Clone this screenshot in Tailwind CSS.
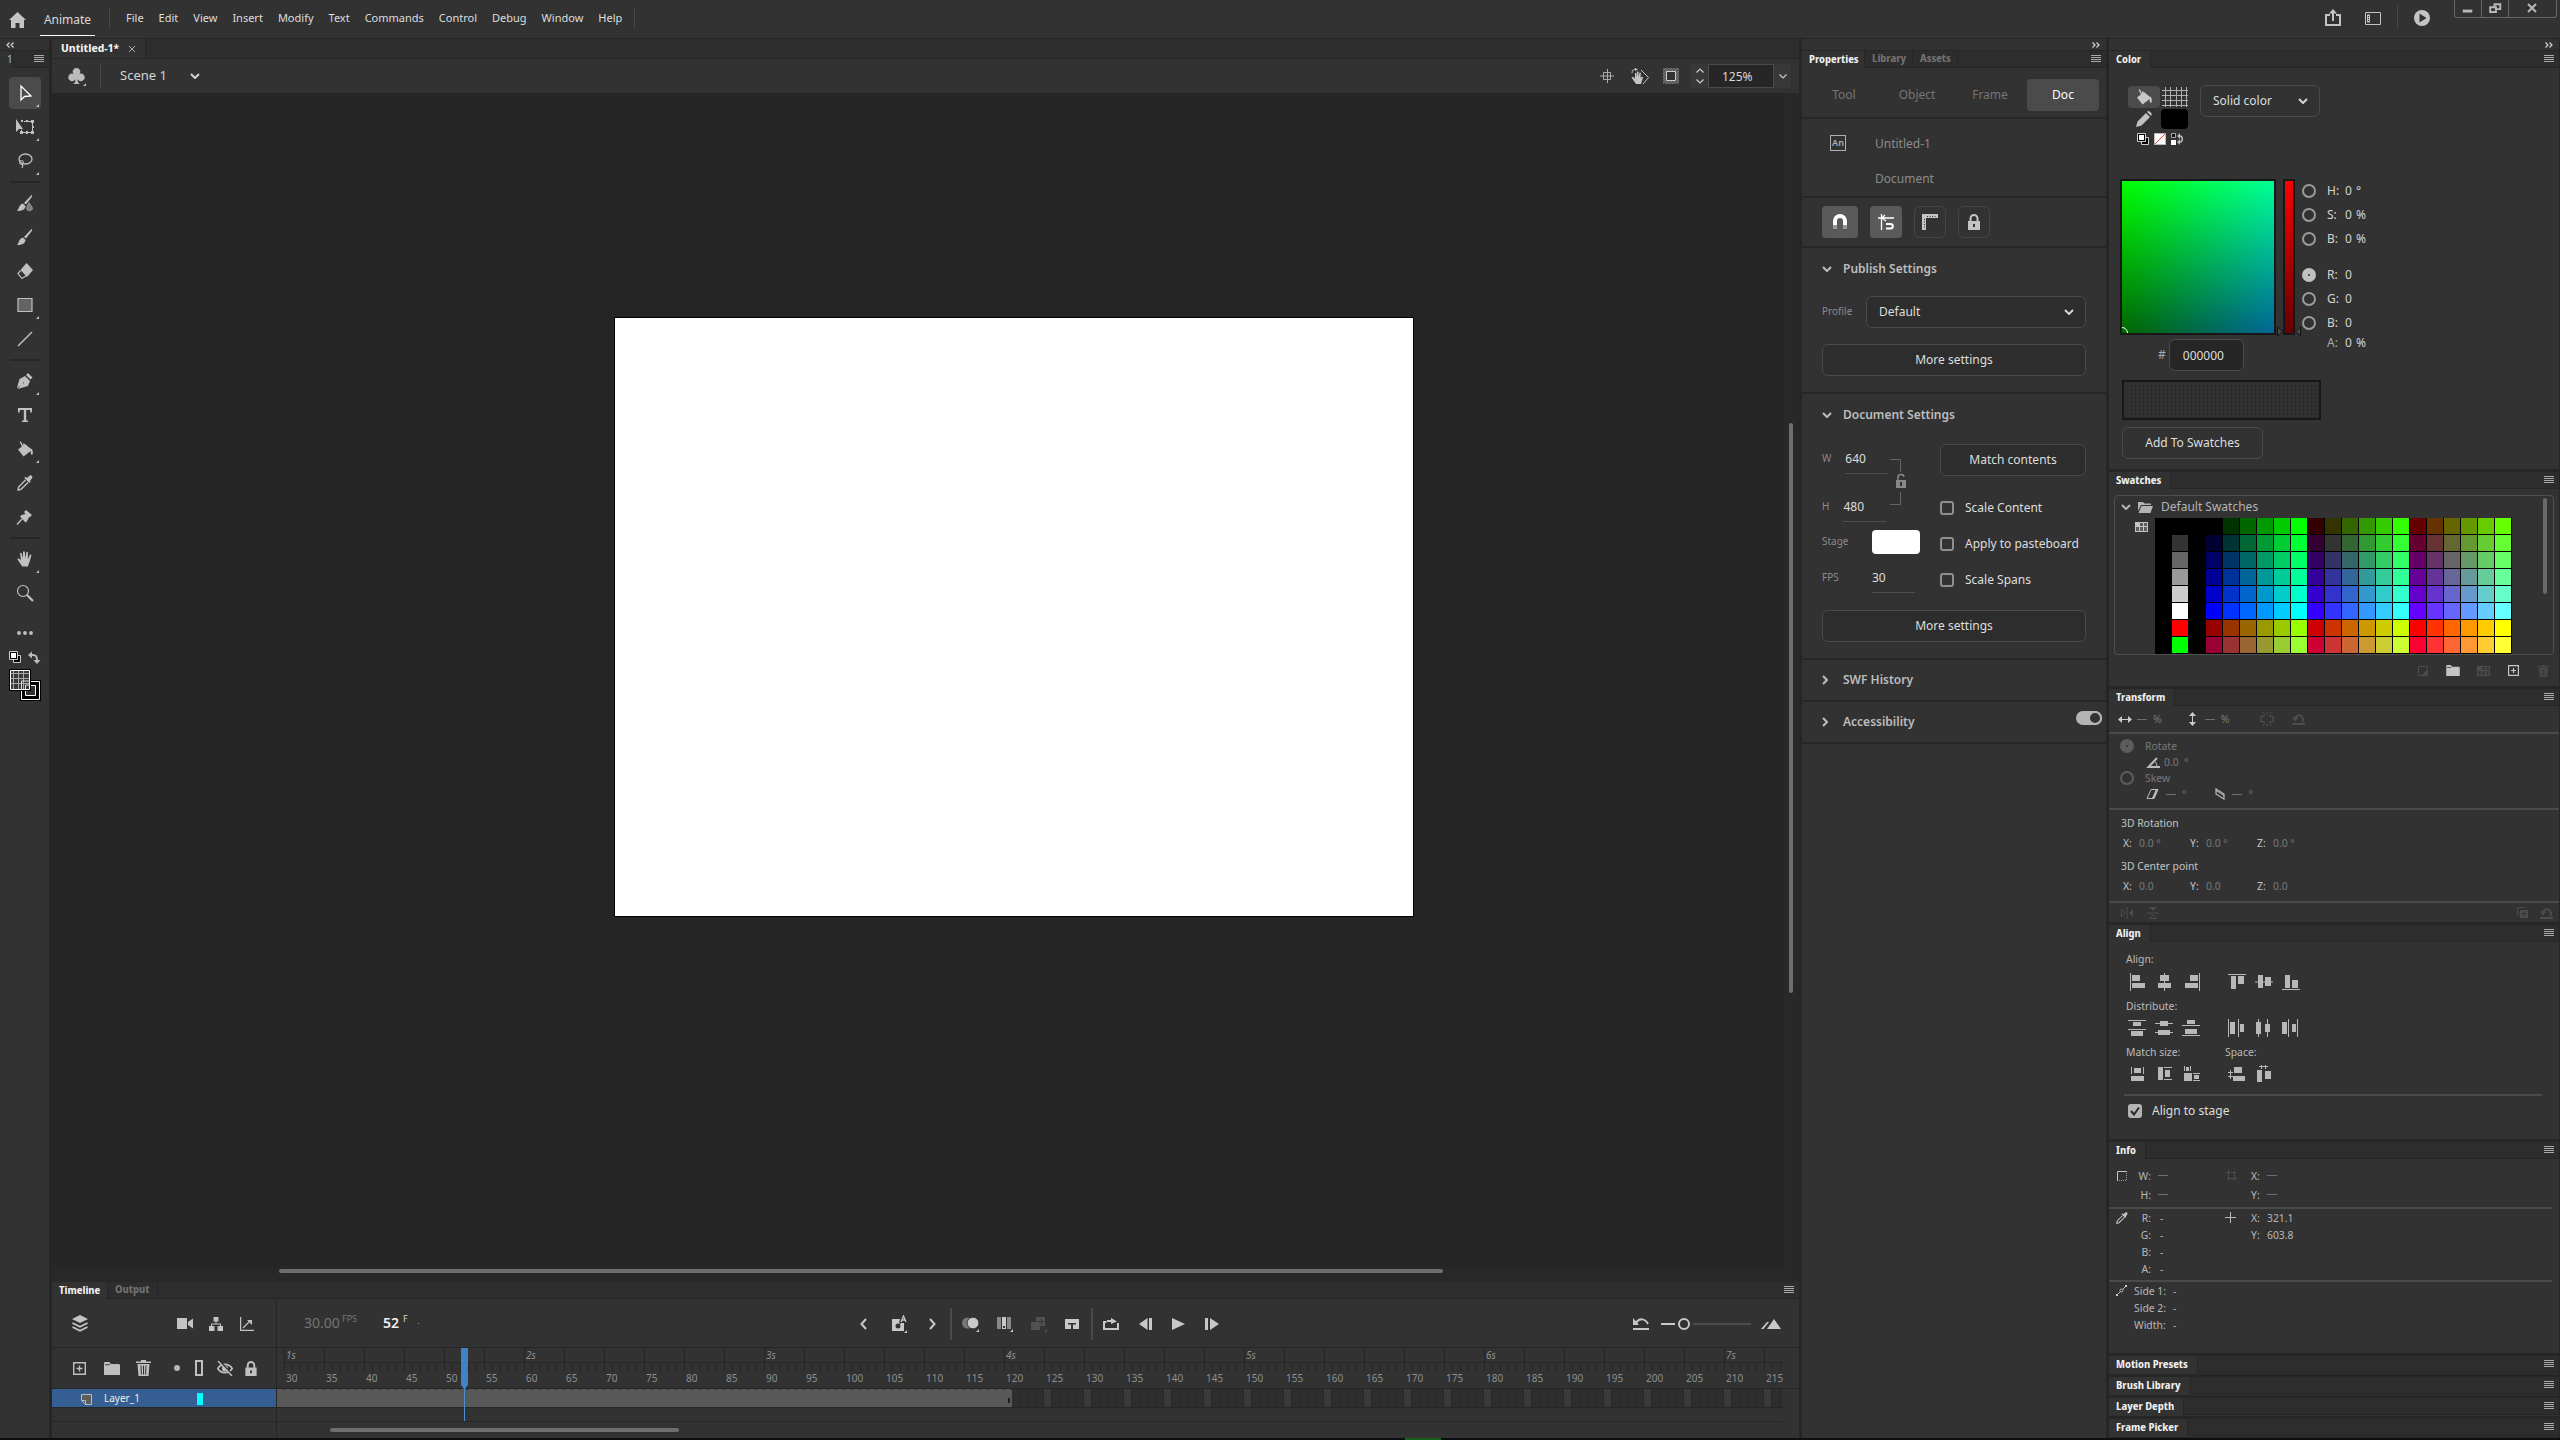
<!DOCTYPE html>
<html lang="en">
<head>
<meta charset="utf-8">
<title>Animate</title>
<script src="https://cdn.jsdelivr.net/npm/@tailwindcss/browser@4"></script>
</head>
<body class="flex h-screen flex-col overflow-hidden bg-[#262626] font-['Noto_Sans',sans-serif] text-xs text-[#d4d4d4]">

<svg class="hidden" aria-hidden="true">
  <symbol id="menu" viewBox="0 0 10 8"><path fill="currentColor" d="M0 0h10v1H0zM0 2h10v1H0zM0 4h10v1H0zM0 6h10v1H0z"/></symbol>
  <symbol id="down" viewBox="0 0 10 6"><path fill="none" stroke="currentColor" stroke-width="2" d="M1 1l4 4 4-4"/></symbol>
  <symbol id="thindown" viewBox="0 0 8 5"><path fill="none" stroke="currentColor" stroke-width="1.2" d="M.5.5L4 4 7.500 .5"/></symbol>
  <symbol id="right" viewBox="0 0 6 10"><path fill="none" stroke="currentColor" stroke-width="2" d="M1 1l4 4-4 4"/></symbol>
  <symbol id="dbl" viewBox="0 0 8 6"><path fill="none" stroke="currentColor" stroke-width="1.200" d="M.5.5L3 3 .5 5.500M4.500 .5L7 3 4.500 5.500"/></symbol>
  <symbol id="corner" viewBox="0 0 3 3"><path fill="currentColor" d="M3 0v3H0z"/></symbol>
  <symbol id="bucket" viewBox="0 0 16 16"><path fill="currentColor" d="M1 8.500L8 3l5.500 4.500c1.800.3 2.500 2 2.300 5.500l-1 1c-1-.8-1.300-2-1.100-4L6.500 15.500z"/><path fill="none" stroke="currentColor" stroke-width="1.400" d="M3.200.6L6.500 7M6.500 2.500L8 6"/></symbol>
  <symbol id="dropper" viewBox="0 0 16 16"><path fill="currentColor" d="M10 3l2.500-2.300c1.500-1.200 3.800 1 2.500 2.600L13 6l.6.700-1.300 1.300-5-5L8.600 1.700z"/><path fill="none" stroke="currentColor" stroke-width="1.400" d="M8.500 5L1.600 12 1 15l3-.7L11 7.500"/></symbol>
  <symbol id="folder" viewBox="0 0 16 13"><path fill="currentColor" d="M0 1.500C0 .7.500 0 1.200 0h4l1.800 2H15l1 1v10H0z"/><path fill="#323232" d="M1 2.300h5v.9H1z"/></symbol>
  <symbol id="plusbox" viewBox="0 0 13 13"><path fill="none" stroke="currentColor" stroke-width="1.400" d="M.7.7h11.600v11.600H.7zM6.500 3.500v6M3.500 6.500h6"/></symbol>
  <symbol id="trash" viewBox="0 0 15 16"><path fill="currentColor" d="M5 0h5v1.500h5V3H0V1.500h5zM1.500 4h12l-1 12h-10z"/><path stroke="#323232" d="M5 5.500l.4 9M7.500 5.500v9M10 5.500l-.4 9"/></symbol>
  <symbol id="lock" viewBox="0 0 12 16"><path fill="currentColor" d="M0 7h12v9H0z"/><path fill="none" stroke="currentColor" stroke-width="2" d="M2.500 8V4.500a3.500 3.500 0 017 0V8"/><path fill="#323232" d="M5 10h2v3H5z"/></symbol>
  <symbol id="swgrid" viewBox="0 0 13 10"><path fill="currentColor" d="M0 0h13v10H0z"/><path fill="#323232" d="M5 1h3v3H5zM9 1h3v3H9zM1 5h3v4H1zM5 5h3v4H5zM9 5h3v4H9z" opacity=".7"/></symbol>
  <symbol id="defcol" viewBox="0 0 12 12"><path fill="#000" stroke="#ccc" d="M4.500 4.500h7v7h-7z"/><path fill="#fff" stroke="#000" stroke-width="2" d="M1 1h7v7H1z"/><path fill="none" stroke="#ccc" d="M.5.5h8v8h-8z"/></symbol>
  <symbol id="reset" viewBox="0 0 13 12"><path fill="none" stroke="currentColor" stroke-width="2" d="M3 6a4 4 0 117 3M0 11h13"/><path fill="currentColor" d="M0 4.500h6.500L3 8.500z"/></symbol>
  <symbol id="hatch" viewBox="0 0 26 20"><path stroke="#b0b0b0" stroke-width="1" fill="none" d="M3.500 0v20M8.500 0v20M14.500 0v20M19.500 0v20M24.500 0v20M0 3.500h26M0 8.500h26M0 13.500h26M0 18.500h26"/></symbol>
</svg>

<header class="flex h-[38px] shrink-0 bg-[#323232]">
  <button aria-label="Home" class="ml-[9px] mt-[11px] size-[17px] text-[#c4c4c4]"><svg viewBox="0 0 17 16"><path fill="currentColor" d="M8.500 0L17 8h-2v8h-4.500v-5h-4v5H2V8H0z"/></svg></button>
  <a href="#" class="ml-3.5 mr-3.5 mt-1 flex h-8 w-[55px] items-center justify-center border-b border-white text-[#d8d8d8]">Animate</a>
  <i class="mt-2 h-5 w-px bg-[#494949]"></i>
  <nav class="mt-2 ml-4 flex h-5 items-center gap-[15px] text-[11px] text-[#dedede]">
    <a href="#">File</a><a href="#">Edit</a><a href="#">View</a><a href="#">Insert</a><a href="#">Modify</a><a href="#">Text</a><a href="#">Commands</a><a href="#">Control</a><a href="#">Debug</a><a href="#">Window</a><a href="#">Help</a>
  </nav>
  <i class="mt-2 ml-3 h-5 w-px bg-[#494949]"></i>
  <div class="ml-auto flex text-[#c4c4c4]">
    <button aria-label="Share" class="mt-[9px] h-[17px] w-4"><svg viewBox="0 0 16 17"><path fill="none" stroke="currentColor" stroke-width="2" d="M5 6H1v10h14V6h-4M8 12V2"/><path fill="currentColor" d="M8 0l4 4.500H4z"/></svg></button>
    <button aria-label="Workspace" class="mt-3 ml-6 h-[13px] w-4"><svg viewBox="0 0 16 13"><path fill="none" stroke="currentColor" d="M.5.5h15v12H.5z"/><path fill="currentColor" d="M2 2.500h3v8H2z"/><path fill="#323232" d="M3 4h1v1H3zM3 6h1v1H3zM3 8h1v1H3z"/></svg></button>
    <i class="mt-1.5 ml-4 h-[23px] w-px bg-[#494949]"></i>
    <button aria-label="Test movie" class="mt-2.5 ml-4 size-4"><svg viewBox="0 0 16 16"><circle cx="8" cy="8" r="8" fill="currentColor"/><path fill="#323232" d="M5.500 3.500L12.500 8l-7 4.500z"/></svg></button>
    <div class="mr-[3px] ml-6 flex h-[18px] rounded-b-[3px] border border-t-0 border-[#666]">
      <button aria-label="Minimize" class="w-[27px] border-r border-[#666]"><svg viewBox="0 0 27 17"><path fill="#b8b8b8" d="M8 10h10v3H8z"/></svg></button>
      <button aria-label="Restore" class="w-[27px] border-r border-[#666]"><svg viewBox="0 0 27 17"><path fill="#323232" stroke="#b8b8b8" stroke-width="2" d="M13 4.500h6v5h-6z"/><path fill="#323232" stroke="#b8b8b8" stroke-width="2" d="M8.500 7.500h6v5h-6z"/></svg></button>
      <button aria-label="Close" class="w-[47px]"><svg viewBox="0 0 47 17"><path stroke="#b8b8b8" stroke-width="2" d="M19 4l8 8M27 4l-8 8"/></svg></button>
    </div>
  </div>
</header>

<div class="mt-px flex min-h-0 flex-1 gap-[3px]">

  <!-- Tools -->
  <aside class="flex w-[49px] shrink-0 flex-col bg-[#323232]">
    <div class="flex h-3 shrink-0 items-center border-b border-[#262626] pl-1.5"><svg class="h-1.5 w-2 rotate-180"><use href="#dbl"/></svg></div>
    <div class="flex h-[17px] items-center text-[10px]"><span class="w-3 pl-[7px] text-[#8fc1ea]">1</span><span class="flex h-full flex-1 items-center justify-end border-b border-l border-[#262626] bg-[#2d2d2d] pr-[5px]"><svg class="h-2 w-2.5 text-[#aaa]"><use href="#menu"/></svg></span></div>
    <div id="tools" class="flex flex-col items-center gap-0.5 pt-[9px] text-[#c0c0c0]"></div>
    <div class="relative mx-auto mt-2 h-[52px] w-8">
      <svg class="h-[52px] w-8" viewBox="0 0 32 52">
        <use href="#defcol" x="0" y="0" width="12" height="12"/>
        <path fill="none" stroke="#bbb" stroke-width="2" d="M22 4h2c3 0 4 1 4 5v1"/><path fill="#bbb" d="M19 4l4-3.500v7zM24.500 9h7L28 13z"/>
        <path fill="#000" d="M11 29h21v21H11z"/><path fill="none" stroke="#fff" d="M12.500 30.500h18v18h-18zM16.500 34.500h10v10h-10z"/><path fill="#323232" d="M17 35h9v9h-9z"/>
        <path fill="#000" d="M0 18h22v22H0z"/><path fill="#3a3a3a" stroke="#fff" d="M1.500 19.500h19v19h-19z"/>
        <path stroke="#aaa" d="M4.500 20v18M9.500 20v18M14.500 20v18M2 22.500h18M2 27.500h18M2 32.500h18"/><path fill="none" stroke="#ddd" d="M12.500 39v-9H21M16.500 38v-4H21"/>
      </svg>
    </div>
  </aside>

  <!-- Document and timeline -->
  <main class="flex min-w-0 flex-1 flex-col">
    <div class="flex h-5 shrink-0 border-b border-[#262626] bg-[#2d2d2d]">
      <div class="flex w-[94px] items-center border-r border-[#262626] bg-[#323232] pl-[9px] font-['Noto_Sans_Display','Noto_Sans',sans-serif] text-[11px] font-bold text-[#f0f0f0]">Untitled-1*<button aria-label="Close tab" class="ml-2.5 size-1.5"><svg viewBox="0 0 6 6"><path stroke="#aaa" d="M0 0l6 6M6 0L0 6"/></svg></button></div>
    </div>
    <div class="flex h-[34px] shrink-0 items-center bg-[#323232]">
      <button aria-label="Symbols" class="relative ml-4 size-[17px] text-[#bbb]"><svg viewBox="0 0 17 17"><path fill="currentColor" d="M8.500 0a3.600 3.600 0 013 5.800 3.800 3.800 0 11-2 5.400c0 2.300.8 3.800 2.500 4.800H5c1.700-1 2.500-2.500 2.500-4.800a3.800 3.800 0 11-2-5.400A3.600 3.600 0 018.500 0z"/></svg><svg class="absolute -right-px -bottom-px size-[3px]"><use href="#corner"/></svg></button>
      <i class="ml-[15px] h-6 w-px bg-[#4a4a4a]"></i>
      <div class="relative ml-[19px] flex items-center"><select aria-label="Scene" class="w-20 appearance-none text-[13px]"><option>Scene 1</option></select><svg class="pointer-events-none absolute right-0 h-1.5 w-2.5"><use href="#down"/></svg></div>
      <div class="ml-auto flex items-center text-[#aaa]">
        <button aria-label="Center stage" class="size-[14px]"><svg viewBox="0 0 14 14"><path fill="none" stroke="currentColor" d="M3.500 3.500h7v7h-7zM7.500 0v14M0 7h14"/></svg></button>
        <button aria-label="Rotate stage" class="ml-[17px] h-[17px] w-[18px]"><svg viewBox="0 0 18 17"><path fill="#c4c4c4" d="M5 16L.5 9.500l1.500-.8 2 2V5l1.300-.3.700 4V3.500h1.500V9l1-4.500 1.300.3-.2 5L11 8.500l1 1L10 16z"/><path fill="none" stroke="#c4c4c4" d="M1 5c0-3 2-4 4-4M10 2l7.500 7.500L12 16"/><path fill="#c4c4c4" d="M4 0l3 1.500L4 3z"/></svg></button>
        <button aria-label="Clip content" class="ml-3.5 size-4"><svg viewBox="0 0 16 16"><path fill="#555" d="M0 0h16v16H0z"/><path stroke="#888" stroke-width=".8" d="M0 3l3-3M0 6l6-6M0 9l3-3M6 3l3-3M0 12l3-3M9 3l3-3M0 15l3-3M12 3l3-3M3 16l3-3M6 16l3-3M9 16l3-3M13 6l3-3M13 9l3-3M13 12l3-3M13 15l3-3"/><path fill="#323232" stroke="#ccc" d="M3.500 3.500h9v9h-9z"/></svg></button>
        <div class="ml-3 flex h-6 w-[17px] flex-col items-center justify-between bg-[#383838] py-1 text-[#ccc]"><svg class="h-[5px] w-2 rotate-180"><use href="#thindown"/></svg><svg class="h-[5px] w-2"><use href="#thindown"/></svg></div>
        <input aria-label="Zoom" value="125%" class="h-6 w-[66px] border border-[#4a4a4a] bg-[#262626] pl-[13px] text-xs text-[#d8d8d8]">
        <button aria-label="Zoom levels" class="mr-2 flex h-6 w-[17px] items-center justify-center bg-[#383838] text-[#ccc]"><svg class="h-[5px] w-2"><use href="#thindown"/></svg></button>
      </div>
    </div>
    <div class="relative min-h-0 flex-1 bg-[#252525]">
      <div class="absolute top-0 right-0 bottom-0 w-4 bg-[#282828]"></div>
      <div class="absolute right-0 bottom-0 left-0 h-4 bg-[#282828]"></div>
      <div class="absolute top-[224px] left-[562px] h-[600px] w-[800px] border border-black bg-white"></div>
      <div class="absolute top-[330px] right-1.5 h-[570px] w-1 rounded-full bg-[#6e6e6e]"></div>
      <div class="absolute bottom-[9px] left-[227px] h-1 w-[1164px] rounded-full bg-[#6e6e6e]"></div>
    </div>

    <section class="shrink-0 bg-[#323232]">
      <div class="flex h-[17px] font-['Noto_Sans_Display','Noto_Sans',sans-serif] text-[10px] font-bold">
        <button class="w-14 border-r border-[#262626] pl-[7px] text-left text-[#f0f0f0]">Timeline</button>
        <button class="w-[50px] border-r border-b border-[#262626] bg-[#2d2d2d] pl-[7px] text-left text-[#737373]">Output</button>
        <div class="flex flex-1 items-center justify-end border-b border-[#262626] bg-[#2d2d2d] pr-[5px]"><svg class="h-2 w-2.5 text-[#aaa]"><use href="#menu"/></svg></div>
      </div>
      <div class="flex h-[49px] border-b border-[#262626] pt-px">
        <div class="flex w-[225px] items-center border-r border-[#262626] text-[#c4c4c4]">
          <button aria-label="Layer view" class="ml-5 h-[17px] w-4"><svg viewBox="0 0 16 17"><path fill="currentColor" d="M8 0l8 4-8 4-8-4z"/><path fill="none" stroke="currentColor" stroke-width="1.800" d="M.5 8L8 11.700 15.500 8M.5 12L8 15.700 15.500 12"/></svg></button>
          <button aria-label="Camera" class="ml-[89px] h-[11px] w-4"><svg viewBox="0 0 16 11"><path fill="currentColor" d="M0 0h10v11H0zM11 4l5-3.500v10L11 7z"/></svg></button>
          <button aria-label="Parenting" class="ml-4 size-[14px]"><svg viewBox="0 0 14 14"><path fill="currentColor" d="M4.500 0h5v4.500h-5zM0 9h5.500v5H0zM8.500 9H14v5H8.500zM6.500 4h1v2.500h4.500V9h-1V7.500H3V9H2V6.500h4.500z"/></svg></button>
          <button aria-label="Graph" class="ml-[17px] size-[14px]"><svg viewBox="0 0 14 14"><path fill="none" stroke="currentColor" stroke-width="1.200" d="M.6 0v13.400H14M3 11l7-7"/><path fill="currentColor" d="M7 3h5v5z"/></svg></button>
        </div>
        <div class="flex flex-1 items-center text-[14px]">
          <span class="ml-[27px] w-[38px] text-[#747474]">30.00</span><sup class="text-[9px] text-[#747474]">FPS</sup>
          <span class="ml-[26px] font-semibold text-[#f0f0f0]">52</span><sup class="ml-1 text-[9px]">F</sup><i class="ml-2.5 size-px bg-[#999]"></i>
          <div class="ml-[441px] flex items-center text-[#c8c8c8]">
            <button aria-label="Previous keyframe" class="h-3 w-[7px]"><svg viewBox="0 0 7 12"><path fill="none" stroke="currentColor" stroke-width="2" d="M6 1L1.500 6 6 11"/></svg></button>
            <button aria-label="Auto keyframe" class="ml-[25px] h-[18px] w-[15px]"><svg viewBox="0 0 15 18"><path fill="currentColor" d="M0 4h8l-1 4h5v8H0z"/><circle cx="6" cy="11" r="2.500" fill="#323232"/><path stroke="#323232" d="M6 11l5-6"/><path fill="none" stroke="currentColor" stroke-width="1.300" d="M9 7l2.500-6L14 7M10 5h3.500"/><path fill="currentColor" d="M15 15v3h-3z"/></svg></button>
            <button aria-label="Next keyframe" class="ml-[22px] h-3 w-[7px]"><svg viewBox="0 0 7 12"><path fill="none" stroke="currentColor" stroke-width="2" d="M1 1l4.500 5L1 11"/></svg></button>
            <i class="ml-3.5 h-8 w-0.5 bg-[#4a4a4a]"></i>
            <button aria-label="Onion skin" class="ml-2.5 h-4 w-[17px]"><svg viewBox="0 0 17 16"><circle cx="5.500" cy="7" r="5.500" fill="#777"/><circle cx="11" cy="7" r="5.800" fill="currentColor" stroke="#323232" stroke-width=".8"/><path fill="currentColor" d="M17 13v3h-3z"/></svg></button>
            <button aria-label="Edit multiple frames" class="ml-[18px] h-4 w-4"><svg viewBox="0 0 16 16"><path fill="#888" d="M0 1h4v12H0zM10 1h4v12h-4z"/><path fill="currentColor" d="M5 1h4v12H5z"/><path fill="#323232" d="M6 10h2v2H6z"/><path fill="currentColor" d="M16 13v3h-3z"/></svg></button>
            <button aria-label="Insert frames" class="ml-[18px] h-4 w-4 text-[#505050]"><svg viewBox="0 0 16 16"><path fill="currentColor" d="M5 1h9v9h-5v4H0V6h5z"/><path stroke="#323232" d="M6 5.500h6M9.500 3L12 5.500 9.500 8" fill="none"/><path fill="currentColor" d="M16 13v3h-3z"/></svg></button>
            <button aria-label="Frame span" class="ml-[18px] h-2.5 w-[14px]"><svg viewBox="0 0 14 10"><path fill="currentColor" d="M0 0h14v10H0z"/><path fill="#323232" d="M3 4h8v1.500H8V10H6V5.500H3z"/></svg></button>
            <i class="ml-3 h-8 w-0.5 bg-[#4a4a4a]"></i>
            <button aria-label="Loop" class="ml-2.5 h-3 w-4"><svg viewBox="0 0 16 12"><path fill="none" stroke="currentColor" stroke-width="2" d="M3.500 4H1v7h14V5M4 3h5"/><path fill="currentColor" d="M8 0l6 3.500L8 6z"/></svg></button>
            <button aria-label="Step back" class="ml-5 h-3 w-[13px]"><svg viewBox="0 0 13 12"><path fill="currentColor" d="M8.500 0v12L0 6zM10 0h3v12h-3z"/></svg></button>
            <button aria-label="Play" class="ml-5 h-3 w-[13px]"><svg viewBox="0 0 13 12"><path fill="currentColor" d="M0 0l13 6-13 6z"/></svg></button>
            <button aria-label="Step forward" class="ml-5 h-3 w-[14px]"><svg viewBox="0 0 14 12"><path fill="currentColor" d="M0 0h3v12H0zM5 0l9 6-9 6z"/></svg></button>
          </div>
          <div class="mr-[18px] ml-auto flex items-center text-[#c8c8c8]">
            <button aria-label="Reset zoom" class="h-3 w-4"><svg viewBox="0 0 16 12"><path fill="none" stroke="currentColor" stroke-width="2" d="M3 5c3-5 9-5 12 1M0 11h16"/><path fill="currentColor" d="M0 0v7h6z"/></svg></button>
            <i class="ml-3 h-0.5 w-3.5 bg-[#c8c8c8]"></i><i class="mx-[3px] size-3 rounded-full border-2 border-[#c8c8c8]"></i><i class="h-0.5 w-[58px] bg-[#4c4c4c]"></i>
            <button aria-label="Zoom timeline" class="ml-2.5 h-2.5 w-5"><svg viewBox="0 0 20 10"><path fill="currentColor" d="M13 0l7 10H6zM6 3h2L2.500 10H0z"/></svg></button>
          </div>
        </div>
      </div>

      <div class="relative flex">
        <div class="w-[225px] shrink-0 border-r border-[#262626]">
          <div class="flex h-[41px] items-center border-b border-[#262626] text-[#c0c0c0]">
            <button aria-label="New layer" class="ml-[21px] size-[13px]"><svg class="size-[13px]"><use href="#plusbox"/></svg></button>
            <button aria-label="New folder" class="ml-[18px] h-[13px] w-4"><svg class="h-[13px] w-4"><use href="#folder"/></svg></button>
            <button aria-label="Delete" class="ml-4 h-4 w-[15px]"><svg class="h-4 w-[15px]"><use href="#trash"/></svg></button>
            <i class="ml-[23px] size-1.5 rounded-full bg-[#b8b8b8]"></i>
            <i class="ml-[15px] h-4 w-2 border-2 border-[#c0c0c0]"></i>
            <button aria-label="Hide all" class="ml-3.5 h-[15px] w-4"><svg viewBox="0 0 16 15"><path fill="none" stroke="currentColor" stroke-width="1.600" d="M.8 7.500c3.500-5.500 11-5.500 14.400 0-3.500 5.500-11 5.500-14.400 0z"/><circle cx="8" cy="7.500" r="3" fill="currentColor"/><path stroke="#323232" stroke-width="2" d="M2.500 0l13 14"/><path stroke="currentColor" stroke-width="1.400" d="M1 0l14 15"/></svg></button>
            <button aria-label="Lock all" class="ml-3 h-[15px] w-3"><svg class="h-[15px] w-3"><use href="#lock"/></svg></button>
          </div>
          <div class="flex h-[18px] items-center bg-[#355f92] pt-0.5 text-[10px] text-[#eee]">
            <svg class="ml-[29px] h-[11px] w-[11px]" viewBox="0 0 11 11"><path fill="#5d5d5d" stroke="#bbb" d="M.5.5h10v10h-6v-4h-4z"/><path fill="none" stroke="#bbb" d="M.5 6.500l4 4"/></svg>
            <span class="ml-3 w-[93px]">Layer_1</span><i class="h-3 w-[6px] bg-[#00ffff]"></i>
          </div>
          <div class="h-[15px] border-y border-[#262626]"></div>
          <div class="h-4"></div>
        </div>
        <div class="min-w-0 flex-1">
          <div class="h-[41px] border-b border-[#262626] pr-4"><div id="ruler" class="flex h-10 overflow-hidden pl-[7px] text-[10px] leading-none text-[#8e8e8e]"></div></div>
          <div class="mr-4 flex h-[18px]">
            <div class="relative w-[735px] bg-[#585858]"><div class="h-px bg-[repeating-linear-gradient(90deg,transparent_0_6px,#1c1c1c_6px_7px,transparent_7px_8px)]"></div><i class="absolute right-0.5 bottom-1 h-[5px] w-0.5 bg-[#1e1e1e]"></i></div>
            <div class="flex-1 bg-[repeating-linear-gradient(90deg,transparent_0_7px,#272727_7px_8px),repeating-linear-gradient(90deg,#2e2e2e_0_32px,#3a3a3a_32px_40px)]"></div>
          </div>
          <div class="mr-4 h-[15px] border-y border-[#262626]"></div>
          <div class="flex h-4 items-center pl-[53px]"><i class="h-1 w-[349px] rounded-full bg-[#6e6e6e]"></i></div>
        </div>
        <svg class="absolute top-0 left-[409px] h-[73px] w-[7px]" viewBox="0 0 7 73"><path fill="#3d82cb" d="M0 0h7v37l-3 4h-1l-3-4z"/><path fill="#4a8fd6" d="M3 40h1v33H3z"/></svg>
      </div>
    </section>
  </main>

  <!-- Properties -->
  <aside class="flex w-[304px] shrink-0 flex-col bg-[#323232]">
    <div class="flex h-3 shrink-0 items-center justify-end border-b border-[#262626] pr-1.5"><svg class="h-1.5 w-2"><use href="#dbl"/></svg></div>
    <div class="flex h-[17px] font-['Noto_Sans_Display','Noto_Sans',sans-serif] text-[10px] font-bold">
      <button class="w-[63px] border-r border-[#262626] pl-[7px] text-left text-[#f0f0f0]">Properties</button>
      <button class="w-12 border-r border-b border-[#262626] bg-[#2d2d2d] pl-[7px] text-left text-[#737373]">Library</button>
      <button class="w-[45px] border-r border-b border-[#262626] bg-[#2d2d2d] pl-[7px] text-left text-[#737373]">Assets</button>
      <div class="flex flex-1 items-center justify-end border-b border-[#262626] bg-[#2d2d2d] pr-[5px]"><svg class="h-2 w-2.5 text-[#aaa]"><use href="#menu"/></svg></div>
    </div>
    <div class="flex h-[51px] gap-px border-b-2 border-[#272727] pt-[11px] pl-[6px] text-[#757575]">
      <button class="h-8 w-[72px]">Tool</button><button class="h-8 w-[72px]">Object</button><button class="h-8 w-[72px]">Frame</button><button class="h-8 w-[72px] rounded bg-[#4b4b4b] text-white">Doc</button>
    </div>
    <div class="flex h-[79px] border-b-2 border-[#272727] pt-2 text-[#8b8b8b]">
      <span class="mt-2 ml-7 flex size-4 items-center justify-center border border-[#b0b0b0] text-[9px] font-semibold text-[#b0b0b0]">An</span>
      <div class="ml-[29px]"><p class="h-[35px] leading-[34px]">Untitled-1</p><p class="h-[35px] leading-[34px]">Document</p></div>
    </div>
    <div class="flex h-[50px] gap-3 border-b-2 border-[#272727] pt-2 pl-5 text-[#c4c4c4]">
      <button aria-label="Snap to objects" class="flex h-8 w-9 items-center justify-center rounded bg-[#5a5a5a]"><svg class="h-4 w-[14px]" viewBox="0 0 14 16"><path fill="none" stroke="#fff" stroke-width="4" d="M2 11V7a5 5 0 0110 0v4"/><path fill="#999" d="M0 11h4v4H0zM10 11h4v4h-4z"/></svg></button>
      <button aria-label="Snap align" class="flex size-8 items-center justify-center rounded bg-[#5a5a5a]"><svg class="size-4" viewBox="0 0 16 16"><path fill="none" stroke="#fff" stroke-width="1.300" d="M0 4h16M3.500 0v16M7 1L4 4l4 3"/><path fill="none" stroke="#fff" stroke-width="2" d="M8 10h4.500a2.300 2.300 0 010 4.600H8"/></svg></button>
      <button aria-label="Rulers" class="flex size-8 items-center justify-center rounded-md border border-[#454545]"><svg class="size-4" viewBox="0 0 16 16"><path fill="currentColor" d="M0 0h16v4H4v12H0z"/><path fill="none" stroke="#323232" stroke-dasharray="1 1.500" d="M5 2.500h10M2.500 5v10"/></svg></button>
      <button aria-label="Lock guides" class="flex size-8 items-center justify-center rounded-md border border-[#454545]"><svg class="h-4 w-3"><use href="#lock"/></svg></button>
    </div>

    <section class="border-b-2 border-[#272727] px-5 pb-4">
      <h2 class="flex h-[41px] items-center font-semibold text-[#bdbdbd]"><svg class="mr-[11px] h-1.5 w-2.5"><use href="#down"/></svg>Publish Settings</h2>
      <div class="mt-[7px] flex h-8 items-center justify-between"><label for="profile" class="text-[10px] text-[#8b8b8b]">Profile</label>
        <div class="relative flex items-center"><select id="profile" class="h-8 w-[220px] appearance-none rounded-md border border-[#4a4a4a] bg-[#2d2d2d] pl-3 text-xs text-[#dedede]"><option>Default</option></select><svg class="pointer-events-none absolute right-3 h-1.5 w-2.5"><use href="#down"/></svg></div></div>
      <button class="mt-4 h-8 w-full rounded-md border border-[#4a4a4a] bg-[#2d2d2d] text-[#dedede]">More settings</button>
    </section>

    <section class="border-b-2 border-[#272727] px-5 pb-4">
      <h2 class="flex h-[42px] items-center font-semibold text-[#bdbdbd]"><svg class="mr-[11px] h-1.5 w-2.5"><use href="#down"/></svg>Document Settings</h2>
      <div class="mt-2 flex text-[#dedede]">
        <div class="w-[118px] text-[10px] text-[#8b8b8b]">
          <div class="flex">
            <div class="flex flex-col gap-[18px]">
              <div class="flex h-[30px] items-center gap-3.5"><label for="dw">W</label><input id="dw" value="640" class="h-[30px] w-[43px] border-b border-[#4f4f4f] text-xs text-[#dedede]"></div>
              <div class="flex h-[30px] items-center gap-3.5"><label for="dh">H</label><input id="dh" value="480" class="h-[30px] w-[43px] border-b border-[#4f4f4f] text-xs text-[#dedede]"></div>
            </div>
            <button aria-label="Link width and height" class="mt-3.5 ml-0.5 h-12 w-4"><svg viewBox="0 0 16 48"><path fill="none" stroke="#666" d="M0 1.500h10.500V14M10.500 34v12.500H0"/><path fill="#888" d="M6 22h10v8H6z"/><path fill="none" stroke="#888" stroke-width="1.500" d="M8 22v-2a3 3 0 016-1"/><path fill="#323232" d="M10 24h2v4h-2z"/></svg></button>
          </div>
          <div class="mt-0.5 flex h-9 items-center"><label for="stage" class="w-[50px]">Stage</label><input id="stage" type="button" class="h-6 w-12 rounded bg-white"></div>
          <div class="flex h-9 items-center"><label for="fps" class="w-[50px]">FPS</label><input id="fps" value="30" class="h-[30px] w-[43px] border-b border-[#4f4f4f] text-xs text-[#dedede]"></div>
        </div>
        <div class="flex-1">
          <button class="mb-3.5 h-8 w-full rounded-md border border-[#4a4a4a] bg-[#2d2d2d]">Match contents</button>
          <label class="flex h-9 items-center gap-[11px] whitespace-nowrap"><input type="checkbox" class="size-3.5 appearance-none rounded-[3px] border-2 border-[#8f8f8f]">Scale Content</label>
          <label class="flex h-9 items-center gap-[11px] whitespace-nowrap"><input type="checkbox" class="size-3.5 appearance-none rounded-[3px] border-2 border-[#8f8f8f]">Apply to pasteboard</label>
          <label class="flex h-9 items-center gap-[11px] whitespace-nowrap"><input type="checkbox" class="size-3.5 appearance-none rounded-[3px] border-2 border-[#8f8f8f]">Scale Spans</label>
        </div>
      </div>
      <button class="mt-3 h-8 w-full rounded-md border border-[#4a4a4a] bg-[#2d2d2d] text-[#dedede]">More settings</button>
    </section>
    <h2 class="flex h-[42px] items-center border-b-2 border-[#272727] pl-5 font-semibold text-[#bdbdbd]"><svg class="mr-[15px] h-2.5 w-1.5"><use href="#right"/></svg>SWF History</h2>
    <div class="flex h-[42px] border-b-2 border-[#272727] pr-1 pl-5"><h2 class="flex items-center font-semibold text-[#bdbdbd]"><svg class="mr-[15px] h-2.5 w-1.5"><use href="#right"/></svg>Accessibility</h2>
      <button role="switch" aria-checked="true" aria-label="Accessibility" class="mt-[9px] ml-auto flex h-3.5 w-[26px] justify-end rounded-full bg-[#b4b4b4]"><i class="size-3.5 rounded-full border-2 border-[#b4b4b4] bg-[#323232]"></i></button></div>
  </aside>

  <!-- Right dock -->
  <aside class="mr-px flex w-[450px] shrink-0 flex-col">
    <div class="flex h-3 shrink-0 items-center justify-end border-b border-[#262626] bg-[#323232] pr-1.5"><svg class="h-1.5 w-2"><use href="#dbl"/></svg></div>

    <section class="bg-[#323232] pb-2.5" data-panel="Color">
      <div class="flex pt-[17px] pl-[19px]">
        <div>
          <div class="flex h-6 items-center gap-0.5"><button aria-label="Fill" class="flex h-[22px] w-8 items-center justify-center rounded bg-[#4b4b4b] text-[#c8c8c8]"><svg class="size-4"><use href="#bucket"/></svg></button><svg class="h-5 w-[26px]"><use href="#hatch"/></svg></div>
          <div class="flex h-5 items-center justify-between"><button aria-label="Stroke" class="ml-2 size-4"><svg viewBox="0 0 16 16"><path fill="#c0c0c0" d="M0 16l1.500-5.500L10 2l4 4-8.500 8.500zM11 1l1-1c1-.5 4 2.500 4 3.500l-1.200 1.300z"/></svg></button><i class="h-5 w-[27px] rounded bg-black"></i></div>
          <div class="mt-1 flex h-3 items-center gap-[5px] pl-[9px]"><svg class="size-3"><use href="#defcol"/></svg><svg class="size-3" viewBox="0 0 12 12"><path fill="#fff" stroke="#bbb" d="M.5.5h11v11H.5z"/><path stroke="#e33" d="M1 11L11 1"/></svg><svg class="size-3" viewBox="0 0 12 12"><path fill="#111" stroke="#aaa" d="M.5.5h4v4h-4z"/><path fill="#fff" d="M0 7h5v5H0z"/><path fill="none" stroke="#bbb" stroke-width="1.500" d="M7 3h2c3 0 3 6 0 6H7"/><path fill="#bbb" d="M6 3l3-3v6zM6 9l3-3v6z"/></svg></div>
        </div>
        <div class="relative ml-3 h-8"><select aria-label="Color type" class="h-8 w-[120px] appearance-none rounded-md border border-[#4a4a4a] pl-3 text-xs text-[#dedede]"><option>Solid color</option></select><svg class="pointer-events-none absolute top-[13px] right-3 h-1.5 w-2.5"><use href="#down"/></svg></div>
      </div>
      <div class="mt-[34px] flex h-48 pl-[11px]">
        <div>
          <div class="relative flex gap-[7px]">
            <div class="relative size-[156px] overflow-hidden border-2 border-[#171717] bg-[linear-gradient(to_right,#000000,#000099),linear-gradient(to_bottom,#00ff00,#006600)] bg-blend-screen"><i class="absolute -bottom-1.5 -left-1.5 size-3 rounded-full border border-white"></i></div>
            <div class="h-[156px] w-3 border-2 border-[#171717] bg-linear-to-b from-[#ff0000] to-[#660000]"></div>
            <svg class="absolute top-[147px] left-[156px] h-[11px] w-[26px]" viewBox="0 0 26 11"><path fill="#4a4a4a" stroke="#111" d="M1.500 1v9l5-4.500zM24.500 1v9l-5-4.500z"/></svg>
          </div>
          <div class="mt-1 flex items-center gap-[3px] pl-[38px]"><label for="hex" class="text-[#aaa]">#</label><input id="hex" value="000000" class="h-8 w-[75px] rounded-md border border-[#4a4a4a] bg-[#262626] pl-[13px] text-xs text-[#dedede]"></div>
        </div>
        <div id="channels" class="ml-[7px] text-[#d4d4d4]"></div>
      </div>
      <div class="mt-[9px] ml-[13px] h-10 w-[199px] border-2 border-[#171717] bg-[#323232] bg-[repeating-linear-gradient(90deg,transparent_0_3px,#2b2b2b_3px_4px),repeating-linear-gradient(transparent_0_3px,#2b2b2b_3px_4px)]"></div>
      <button class="mt-[7px] ml-[13px] h-8 w-[141px] rounded-md border border-[#4a4a4a] text-[#dedede]">Add To Swatches</button>
    </section>

    <section class="bg-[#323232] pt-1.5" data-panel="Swatches">
      <div class="relative mx-[5px] h-40 overflow-hidden rounded-sm border border-[#4f4f4f]">
        <div class="flex h-[22px] items-center text-[#b4b4b4]"><svg class="ml-[6px] h-1.5 w-2.5"><use href="#down"/></svg>
          <svg class="ml-[7px] h-[11px] w-[15px]" viewBox="0 0 15 11"><path fill="currentColor" d="M0 0h5l1.500 1.500H13V3H3L0 9zM3.500 4H15l-2.500 7H.5z"/></svg><span class="ml-2">Default Swatches</span></div>
        <div class="flex"><svg class="mt-1 mr-[7px] ml-5 h-2.5 w-[13px] text-[#c4c4c4]"><use href="#swgrid"/></svg><div id="swatches" class="grid grid-cols-[repeat(21,17px)] bg-black"></div></div>
        <i class="absolute top-0.5 right-1.5 h-24 w-1 rounded-full bg-[#6a6a6a]"></i>
      </div>
      <div class="flex h-[31px] items-center justify-end gap-4 pr-[9px] text-[#4c4c4c]">
        <button aria-label="Edit swatch" class="flex size-3.5 items-center justify-center"><svg class="size-2.5" viewBox="0 0 10 10"><path fill="none" stroke="currentColor" d="M.5.5h9v9h-9z"/><path fill="currentColor" d="M9 4v5H4z"/></svg></button>
        <button aria-label="New folder" class="flex size-3.5 items-center justify-center text-[#c4c4c4]"><svg class="h-[11px] w-3.5"><use href="#folder"/></svg></button>
        <button aria-label="New palette" class="flex size-3.5 items-center justify-center"><svg class="h-2.5 w-[13px]"><use href="#swgrid"/></svg></button>
        <button aria-label="New swatch" class="flex size-3.5 items-center justify-center text-[#c4c4c4]"><svg class="size-[11px]"><use href="#plusbox"/></svg></button>
        <button aria-label="Delete swatch" class="flex size-3.5 items-center justify-center"><svg class="h-3 w-[11px]"><use href="#trash"/></svg></button>
      </div>
    </section>

    <section class="bg-[#323232] font-['Noto_Sans_Display','Noto_Sans',sans-serif] text-[11px] text-[#777]" data-panel="Transform">
      <div class="flex h-[26px] items-center">
        <svg class="ml-[9px] h-[7px] w-3.5 text-[#ccc]" viewBox="0 0 14 7"><path fill="currentColor" d="M0 3.500L4 0v3h6V0l4 3.500L10 7V4H4v3z"/></svg><i class="ml-[5px] h-px w-2.5 bg-[#6e6e6e]"></i><span class="ml-1.5">%</span>
        <svg class="ml-[27px] h-3.5 w-[7px] text-[#ccc]" viewBox="0 0 7 14"><path fill="currentColor" d="M3.500 0L0 4h3v6H0l3.500 4L7 10H4V4h3z"/></svg><i class="ml-[9px] h-px w-2.5 bg-[#6e6e6e]"></i><span class="ml-1.5">%</span>
        <svg class="ml-[31px] size-3.5" viewBox="0 0 14 14"><path fill="none" stroke="#4d4d4d" stroke-width="1.500" d="M5 4H3.500a3 3 0 000 6H5M9 4h1.500a3 3 0 010 6H9"/><path stroke="#4d4d4d" d="M7 0v3M7 11v3M3 0l1.500 2.500M11 0L9.500 2.500M3 14l1.500-2.500M11 14l-1.500-2.500"/></svg>
        <svg class="ml-[18px] h-3 w-[13px] text-[#4d4d4d]"><use href="#reset"/></svg>
      </div>
      <div class="border-y-2 border-[#4a4a4a] pt-1 pb-1.5">
        <label class="flex h-4 items-center pl-[11px]"><input type="radio" name="rs" checked disabled class="mr-[11px] size-3.5 appearance-none rounded-full border-[6px] border-[#5c5c5c]">Rotate</label>
        <div class="flex h-4 items-center pl-[37px]"><svg class="h-[11px] w-3.5" viewBox="0 0 14 11"><path fill="none" stroke="#bbb" stroke-width="2" d="M14 10H2.500L11 1"/><path fill="none" stroke="#bbb" d="M8 4c2 1 3 3 3 6"/></svg><span class="ml-1 w-5">0.0</span>°</div>
        <label class="flex h-4 items-center pl-[11px]"><input type="radio" name="rs" disabled class="mr-[11px] size-3.5 appearance-none rounded-full border-2 border-[#5c5c5c]">Skew</label>
        <div class="flex h-4 items-center pl-[37px]"><svg class="h-2.5 w-[13px]" viewBox="0 0 13 10"><path fill="none" stroke="#bbb" d="M1 9.500L5 .5h7l-4 9z"/><path stroke="#bbb" stroke-width="2" d="M7 9.500l4-9"/></svg><i class="ml-[7px] h-px w-2.5 bg-[#6e6e6e]"></i><span class="ml-1.5">°</span>
          <svg class="ml-[29px] h-3 w-2.5" viewBox="0 0 10 12"><path fill="none" stroke="#bbb" stroke-width="1.200" d="M1 1v5l8 5V6z"/><path stroke="#bbb" d="M1 2.500l8 5"/></svg><i class="ml-[7px] h-px w-2.5 bg-[#6e6e6e]"></i><span class="ml-1.5">°</span></div>
      </div>
      <div class="border-b-2 border-[#4a4a4a] pt-[5px] pb-[7px] pl-3 leading-4">
        <p class="text-[#c0c0c0]">3D Rotation</p>
        <div class="mt-1 flex h-4 pl-0.5"><span class="w-4 text-[#c0c0c0]">X:</span><span class="w-[51px]">0.0 °</span><span class="w-4 text-[#c0c0c0]">Y:</span><span class="w-[51px]">0.0 °</span><span class="w-4 text-[#c0c0c0]">Z:</span><span>0.0 °</span></div>
        <p class="mt-[7px] text-[#c0c0c0]">3D Center point</p>
        <div class="mt-1 flex h-4 pl-0.5"><span class="w-4 text-[#c0c0c0]">X:</span><span class="w-[51px]">0.0</span><span class="w-4 text-[#c0c0c0]">Y:</span><span class="w-[51px]">0.0</span><span class="w-4 text-[#c0c0c0]">Z:</span><span>0.0</span></div>
      </div>
      <div class="flex h-[19px] items-center pr-1.5 pl-3 text-[#4d4d4d]">
        <svg class="h-3 w-3" viewBox="0 0 12 12"><path fill="none" stroke="currentColor" d="M.5 2v8L4 6zM6 0v12"/><path fill="currentColor" d="M12 2v8L8 6z"/></svg>
        <svg class="ml-3.5 h-3 w-3" viewBox="0 0 12 12"><path fill="currentColor" d="M2 0h8L6 4z"/><path fill="none" stroke="currentColor" d="M0 6h12M2 11.500h8L6 8z"/></svg>
        <svg class="ml-auto size-[11px]" viewBox="0 0 11 11"><path fill="none" stroke="currentColor" d="M7 .5H.5V7H3"/><path fill="currentColor" d="M3 3h8v8H3z"/><path stroke="#323232" d="M7 4.500v5M4.500 7h5"/></svg>
        <svg class="ml-3 h-3 w-[13px]"><use href="#reset"/></svg>
      </div>
    </section>

    <section class="bg-[#323232] pt-[9px] pb-[13px] font-['Noto_Sans_Display','Noto_Sans',sans-serif] text-[11px] text-[#b8b8b8]" data-panel="Align">
      <p class="pl-[17px] leading-4">Align:</p>
      <div class="flex h-[30px] items-center gap-[9px] pl-[19px]">
        <button aria-label="Align left" class="size-[18px]"><svg viewBox="0 0 18 18"><path fill="currentColor" d="M2 0h1v18H2zM4 2h8v6H4zM4 10h13v5H4z"/></svg></button>
        <button aria-label="Align horizontal center" class="size-[18px]"><svg viewBox="0 0 18 18"><path fill="currentColor" d="M9 0h1v18H9zM5 2h9v6H5zM3 10h13v5H3z"/></svg></button>
        <button aria-label="Align right" class="size-[18px]"><svg viewBox="0 0 18 18"><path fill="currentColor" d="M17 0h1v18h-1zM8 2h8v6H8zM3 10h13v5H3z"/></svg></button>
        <button aria-label="Align top" class="ml-[19px] size-[18px]"><svg viewBox="0 0 18 18"><path fill="currentColor" d="M0 1h18v1H0zM3 3h5v13H3zM10 3h6v8h-6z"/></svg></button>
        <button aria-label="Align middle" class="size-[18px]"><svg viewBox="0 0 18 18"><path fill="currentColor" d="M0 8.500h18v1H0zM3 2h5v13H3zM10 4h6v9h-6z"/></svg></button>
        <button aria-label="Align bottom" class="size-[18px]"><svg viewBox="0 0 18 18"><path fill="currentColor" d="M0 16h18v1H0zM3 2h5v13H3zM10 7h6v8h-6z"/></svg></button>
      </div>
      <p class="pl-[17px] leading-[18px]">Distribute:</p>
      <div class="flex h-[26px] items-center gap-[9px] pl-[19px]">
        <button aria-label="Distribute top" class="size-[18px]"><svg viewBox="0 0 18 18"><path fill="currentColor" d="M0 1h18v1H0zM5 3h8v4H5zM0 10h18v1H0zM3 12h12v5H3z"/></svg></button>
        <button aria-label="Distribute middle" class="size-[18px]"><svg viewBox="0 0 18 18"><path fill="currentColor" d="M0 4h18v1H0zM5 2h8v5H5zM0 13h18v1H0zM3 11h12v5H3z"/></svg></button>
        <button aria-label="Distribute bottom" class="size-[18px]"><svg viewBox="0 0 18 18"><path fill="currentColor" d="M0 6h18v1H0zM5 1h8v4H5zM0 16h18v1H0zM3 10h12v5H3z"/></svg></button>
        <button aria-label="Distribute left" class="ml-[19px] size-[18px]"><svg viewBox="0 0 18 18"><path fill="currentColor" d="M0 0h1v18H0zM2 3h5v12H2zM10 0h1v18h-1zM12 5h4v8h-4z"/></svg></button>
        <button aria-label="Distribute center" class="size-[18px]"><svg viewBox="0 0 18 18"><path fill="currentColor" d="M3 0h1v18H3zM1 3h5v12H1zM12 0h1v18h-1zM10 5h5v8h-5z"/></svg></button>
        <button aria-label="Distribute right" class="size-[18px]"><svg viewBox="0 0 18 18"><path fill="currentColor" d="M6 0h1v18H6zM0 3h5v12H0zM15 0h1v18h-1zM10 5h4v8h-4z"/></svg></button>
      </div>
      <p class="flex pl-[17px] leading-[22px]"><span class="w-[99px]">Match size:</span>Space:</p>
      <div class="flex h-[22px] items-center gap-[9px] pl-[19px]">
        <button aria-label="Match width" class="size-[18px]"><svg viewBox="0 0 18 18"><path fill="currentColor" d="M3 2h1v7H3zM15 2h1v7h-1zM6 3h7v5H6zM3 11h13v5H3z"/></svg></button>
        <button aria-label="Match height" class="size-[18px]"><svg viewBox="0 0 18 18"><path fill="currentColor" d="M3 2h5v13H3zM10 5h5v7h-5zM9 2h8v1H9zM9 14h8v1H9z"/></svg></button>
        <button aria-label="Match both" class="size-[18px]"><svg viewBox="0 0 18 18"><path fill="currentColor" d="M2 1h1v5H2zM8 1h1v5H8zM4 2h3v4H4zM2 8h8v8H2zM11 8h7v1h-7zM12 10h5v4h-5zM11 15h7v1h-7z"/></svg></button>
        <button aria-label="Space vertically" class="ml-[19px] size-[18px]"><svg viewBox="0 0 18 18"><path fill="currentColor" d="M6 2h8v6H6zM5 11h12v5H5zM2 5h1v9H2zM0 7h5v1H0zM0 11h5v1H0z"/></svg></button>
        <button aria-label="Space horizontally" class="size-[18px]"><svg viewBox="0 0 18 18"><path fill="currentColor" d="M2 5h5v12H2zM10 6h6v8h-6zM4 1h9v1H4zM6 0h1v4H6zM10 0h1v4h-1z"/></svg></button>
      </div>
      <hr class="mt-[9px] mr-[17px] ml-[15px] border-t-2 border-[#4a4a4a]">
      <label class="relative flex h-[30px] items-center gap-2.5 pl-[19px] font-['Noto_Sans',sans-serif] text-xs text-[#dedede]"><input type="checkbox" checked class="size-3.5 appearance-none rounded-[3px] bg-[#b4b4b4]"><svg class="absolute left-[21px] size-2.5" viewBox="0 0 10 10"><path fill="none" stroke="#2a2a2a" stroke-width="2" d="M1 5l3 3.500L9 1.500"/></svg>Align to stage</label>
    </section>

    <section class="bg-[#323232] pb-5 font-['Noto_Sans_Display','Noto_Sans',sans-serif] text-[11px] text-[#b4b4b4]" data-panel="Info">
      <div class="mr-[7px] grid grid-cols-[24px_18px_76px_24px_16px_1fr] items-center border-b-2 border-[#4a4a4a] pt-[7px] pb-[3px] leading-[19px]">
        <svg class="ml-[7px] size-[11px]" viewBox="0 0 11 11"><path fill="none" stroke="#c4c4c4" d="M1.500 11V1.500H11"/><path fill="none" stroke="#999" stroke-dasharray="1 1" d="M10.500 3v7.500H2"/></svg><span class="text-right">W:</span><i class="ml-[7px] h-px w-2.5 bg-[#6e6e6e]"></i><svg class="-ml-px size-[11px]" viewBox="0 0 11 11"><path fill="none" stroke="#4d4d4d" d="M2.500 0v10M0 2.500h10M8.500 1v10M1 8.500h10"/></svg><span>X:</span><i class="h-px w-2.5 bg-[#6e6e6e]"></i>
        <span></span><span class="text-right">H:</span><i class="ml-[7px] h-px w-2.5 bg-[#6e6e6e]"></i><span></span><span>Y:</span><i class="h-px w-2.5 bg-[#6e6e6e]"></i>
      </div>
      <div class="mr-[7px] grid grid-cols-[24px_18px_76px_24px_16px_1fr] items-center border-b-2 border-[#4a4a4a] pb-[3px] leading-[17px]">
        <svg class="ml-[7px] size-3 text-[#c4c4c4]"><use href="#dropper"/></svg><span class="text-right">R:</span><span class="ml-[9px]">-</span><svg class="-ml-0.5 size-[11px]" viewBox="0 0 11 11"><path stroke="#bbb" d="M5.500 0v11M0 5.500h11"/></svg><span>X:</span><span>321.1</span>
        <span></span><span class="text-right">G:</span><span class="ml-[9px]">-</span><span></span><span>Y:</span><span>603.8</span>
        <span></span><span class="text-right">B:</span><span class="col-span-4 ml-[9px]">-</span>
        <span></span><span class="text-right">A:</span><span class="col-span-4 ml-[9px]">-</span>
      </div>
      <div class="grid grid-cols-[25px_39px_1fr] items-center leading-[17px]">
        <svg class="ml-[7px] size-[11px]" viewBox="0 0 11 11"><path stroke="#bbb" d="M0 11L11 0"/><circle cx="5.500" cy="5.500" r="1.500" fill="#323232" stroke="#bbb"/><path fill="#ccc" d="M0 9h2v2H0zM9 0h2v2H9z"/></svg><span>Side 1:</span><span>-</span>
        <span></span><span>Side 2:</span><span>-</span>
        <span></span><span>Width:</span><span>-</span>
      </div>
    </section>
    <section class="bg-[#323232]" data-panel="Motion Presets"></section>
    <section class="bg-[#323232]" data-panel="Brush Library"></section>
    <section class="bg-[#323232]" data-panel="Layer Depth"></section>
    <section class="bg-[#323232]" data-panel="Frame Picker"></section>
  </aside>
</div>
<footer class="relative h-0.5 shrink-0 bg-[#0c0f10]"><i class="ml-[1405px] block h-0.5 w-9 bg-[#14601c]"></i></footer>

<script>
// Dock panel title bars
document.querySelectorAll('[data-panel]').forEach((s, i) => {
  const collapsed = i > 4;
  const bar = document.createElement('div');
  bar.className = "flex h-[17px] shrink-0 font-['Noto_Sans_Display','Noto_Sans',sans-serif] text-[10px] leading-4 font-bold text-[#f0f0f0]";
  bar.innerHTML = `<h2 class="border-r border-[#262626] bg-[#323232] pr-[9px] pl-[7px]">${s.dataset.panel}</h2><div class="flex flex-1 items-center justify-end border-b border-[#262626] bg-[#2d2d2d] pr-[5px]"><svg class="h-2 w-2.5 text-[#aaa]"><use href="#menu"/></svg></div>`;
  s.before(bar);
  s.classList.add('mb-[3px]', 'shrink-0');
  if (collapsed) s.classList.add('h-px');
});

// Toolbar
const C = 'fill="currentColor"', S = 'fill="none" stroke="currentColor"';
const tools = [
  ['Selection', 1, `<path fill="none" stroke="#fff" stroke-width="1.300" d="M4 1v14l3.500-3.500L14 11z"/>`],
  ['Free transform', 1, `<path ${C} d="M-1 0v13l3-3 4 0z"/><path ${S} d="M7 2.500h8.500v11H4.500v-3"/><path ${C} d="M4 1h2v2H4zM9 1h2v2H9zM14 1h3v3h-3zM15 7h2v2h-2zM14 12h3v3h-3zM9 12h2v3H9zM3 12h3v3H3z"/>`],
  ['Lasso', 1, `<ellipse ${S} stroke-width="1.300" cx="8.500" cy="6" rx="6.500" ry="5"/><circle ${S} cx="4.500" cy="9.500" r="2"/><path ${S} stroke-width="1.200" d="M4 10c2 1 2 3 1 5"/>`], 0,
  ['Fluid brush', 0, `<path ${C} d="M14.500 0c1 .3.8 1 .3 2L9 9.500 7 8zM6 8.500L8.500 11c0 3-3 5-8.500 5 2-1.500 1.500-6.500 6-7.500z"/><path fill="#808080" stroke="#aaa" stroke-width=".6" d="M12 7.500c2 3 3.500 4.500 3.500 6 0 3-6 3-6 0 0-1.500 1-3 2.500-6z"/>`],
  ['Brush', 0, `<path ${C} d="M14.500 0c1 .3.8 1 .3 2L9 9.500 7 8zM6 8.500L8.500 11c0 3-3 5-8.500 5 2-1.500 1.500-6.500 6-7.500z"/>`],
  ['Eraser', 0, `<path ${C} d="M9.500 0L16 7l-6 7-6.500-7z"/><path ${S} stroke-width="1.200" d="M3.500 7.500L1 10.500l4 5 4.500-3"/>`],
  ['Rectangle', 1, `<path fill="#636363" stroke="currentColor" stroke-width="1.200" d="M1 1.500h14v13H1z"/>`],
  ['Line', 0, `<path stroke="currentColor" stroke-width="1.400" d="M1 15L15 1"/>`], 0,
  ['Pen', 1, `<path ${C} d="M11 0l4.500 4.500-2 2L9 2zM8 3l5 5-2 5-10.500 3 5-6 1.500.3L7 9 1 14.500 0 15l2.500-9z"/>`],
  ['Text', 0, `<path ${C} d="M1 1h14v4.500h-1.500L13 3H9.200v10.500H11V15H5v-1.500h1.800V3H3l-.5 2.500H1z"/>`],
  ['Paint bucket', 1, `<use href="#bucket" width="16" height="16"/>`],
  ['Eyedropper', 0, `<use href="#dropper" width="16" height="16"/>`],
  ['Asset warp', 0, `<path ${C} d="M7 3l2-2 6 5-2 2-1 .2-2 4-1.500 1.300-5.500-6L4.500 6l4-1z"/><path stroke="currentColor" stroke-width="1.400" d="M5 10l-5 5.500"/>`], 0,
  ['Hand', 1, `<path ${C} d="M5 15L.5 8.500c0-1.500 1.500-1.300 2.200-.5L4 9.500 3 2.500c.2-1 1.500-1 1.700 0L6 7V1c.2-1 1.700-1 1.900 0L8.300 7l1-5.500c.3-1 1.600-.8 1.700.2L10.800 8l2-4c.6-.8 1.800-.3 1.500.7L12.500 11l-1.700 4.500H5z"/>`],
  ['Zoom', 0, `<circle ${S} stroke-width="1.200" cx="6" cy="6" r="5.500"/><path stroke="currentColor" stroke-width="2.200" d="M10 10l6 6"/>`],
  ['More tools', 0, `<g ${C}><circle cx="2" cy="14" r="1.900"/><circle cx="8" cy="14" r="1.900"/><circle cx="14" cy="14" r="1.900"/></g>`]];
document.getElementById('tools').innerHTML = tools.map((t, i) => t === 0
  ? '<i class="my-0.5 h-0.5 w-[30px] bg-[#262626]"></i>'
  : `<button aria-label="${t[0]}" class="relative flex size-8 items-center justify-center rounded ${i ? '' : 'bg-[#4b4b4b]'}"><svg class="size-4 overflow-visible" viewBox="0 0 16 16">${t[2]}</svg>${t[1] ? '<svg class="absolute right-0.5 bottom-0.5 size-[3px]"><use href="#corner"/></svg>' : ''}</button>`).join('');

// Colour channels
document.getElementById('channels').innerHTML = [['H', '°'], ['S', '%'], ['B', '%'], ['R', ''], ['G', ''], ['B', '']].map((c, i) =>
  `<label class="flex h-6 items-center ${i === 3 ? 'mt-3' : ''}"><input type="radio" name="channel" class="mr-[11px] size-3.5 appearance-none rounded-full ${i === 3 ? 'border-[6px] border-[#c0c0c0]' : 'border-2 border-[#9a9a9a]'}" ${i === 3 ? 'checked' : ''}><span class="w-[18px]">${c[0]}:</span><span class="w-[11px]">0</span>${c[1]}</label>`).join('') +
  '<p class="flex h-4 items-center pl-[25px]"><span class="w-[18px] text-[#aaa]">A:</span><span class="w-[11px]">0</span>%</p>';

// Web-safe palette
const special = ['#000', '#333', '#666', '#999', '#ccc', '#fff', '#f00', '#0f0', '#00f'];
let cells = '';
for (let r = 0; r < 9; r++) for (let c = 0; c < 21; c++) {
  let bg = '#000';
  if (c === 1) bg = special[r];
  else if (c > 2) bg = `rgb(${(Math.floor((c - 3) / 6) + (r > 5 ? 3 : 0)) * 51},${(c - 3) % 6 * 51},${r % 6 * 51})`;
  cells += `<i class="h-[17px] border-r border-b border-black" style="background-color:${bg}"></i>`;
}
document.getElementById('swatches').innerHTML = cells;

// Timeline ruler, five frames to a cell
let marks = '';
for (let f = 30; f <= 215; f += 5)
  marks += `<div class="w-10 shrink-0"><div class="h-3.5 border-l border-[#262626] pt-0.5 pl-px italic">${f % 30 ? '' : f / 30 + 's'}</div><div class="h-px bg-[#262626]"></div><div class="h-2 bg-[repeating-linear-gradient(90deg,#262626_0_1px,transparent_1px_8px)]"></div><div class="pt-0.5 pl-0.5">${f}</div></div>`;
document.getElementById('ruler').innerHTML = marks;
</script>
</body>
</html>
